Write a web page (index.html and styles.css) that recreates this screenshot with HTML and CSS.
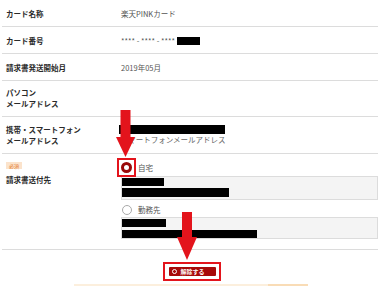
FILE: index.html
```html
<!DOCTYPE html>
<html lang="ja">
<head>
<meta charset="utf-8">
<link rel="stylesheet" href="styles.css">
</head>
<body>
<div class="page">
  <div class="row r-short">
    <div class="label">カード名称</div>
    <div class="value">楽天PINKカード</div>
  </div>
  <div class="row r-short">
    <div class="label">カード番号</div>
    <div class="value">**** - **** - **** -<span class="mask card-mask"></span></div>
  </div>
  <div class="row r-short">
    <div class="label">請求書発送開始月</div>
    <div class="value">2019年05月</div>
  </div>
  <div class="row r-tall r-pc">
    <div class="label">パソコン<br>メールアドレス</div>
    <div class="value"></div>
  </div>
  <div class="row r-tall r-mobile">
    <div class="label">携帯・スマートフォン<br>メールアドレス</div>
    <div class="value">
      <div class="mask mobile-mask"></div>
      <div class="hint">スマートフォンメールアドレス</div>
    </div>
  </div>
  <div class="row r-addr">
    <div class="label">
      <span class="badge">必須</span>
      <div class="label-text">請求書送付先</div>
    </div>
    <div class="value">
      <div class="radio-line">
        <span class="radio checked"></span><span class="radio-text">自宅</span>
      </div>
      <div class="addr-box box-home">
        <span class="mask bar-a"></span>
        <span class="mask bar-b"></span>
      </div>
      <div class="radio-line second">
        <span class="radio"></span><span class="radio-text">勤務先</span>
      </div>
      <div class="addr-box box-work">
        <span class="mask bar-c"></span>
        <span class="mask bar-d"></span>
      </div>
    </div>
  </div>
  <div class="actions">
    <div class="highlight">
      <button class="btn"><span class="btn-icon"></span>解除する</button>
    </div>
  </div>
  <div class="notice"><span class="notice-accent"></span></div>
</div>

<div class="mark-radio"></div>
<svg class="arrow arrow-1" width="20" height="47" viewBox="0 0 20 47">
  <rect x="4.5" y="0" width="10" height="28" fill="#e3141c"/>
  <polygon points="0,27 19,27 9.5,47" fill="#e3141c"/>
</svg>
<svg class="arrow arrow-2" width="21" height="48" viewBox="0 0 21 48">
  <rect x="5" y="0" width="10" height="26" fill="#e3141c"/>
  <polygon points="0,25 20,25 10,48" fill="#e3141c"/>
</svg>
</body>
</html>
```

FILE: styles.css
```css
* { box-sizing: border-box; }

html, body {
  margin: 0;
  padding: 0;
  background: #ffffff;
}

body {
  width: 378px;
  height: 286px;
  overflow: hidden;
  position: relative;
  font-family: "Noto Sans CJK JP", "Noto Sans", sans-serif;
  font-size: 7.5px;
  line-height: 11px;
  color: #444;
}

.page {
  margin-left: 2px;
  width: 376px;
}

.row {
  display: grid;
  grid-template-columns: 115px 1fr;
  padding-left: 4px;
  border-bottom: 1px solid #dcdcdc;
}

.r-short { padding-top: 8px; padding-bottom: 7px; }
.r-pc { padding-top: 6px; padding-bottom: 7px; }
.r-mobile { padding-top: 7px; padding-bottom: 7px; }
.r-addr { padding-top: 8px; padding-bottom: 10px; }

.label {
  color: #2a2a2a;
  font-weight: 700;
}

.value {
  color: #555;
}

.mask {
  background: #000;
  display: inline-block;
}

.card-mask {
  width: 23px;
  height: 8px;
  vertical-align: -1px;
  margin-left: -2px;
}

.mobile-mask {
  display: block;
  width: 106px;
  height: 9px;
  margin-top: 1px;
  margin-left: -2px;
}

.hint {
  color: #666;
}

.badge {
  display: inline-block;
  background: #fbe3cc;
  color: #e3782b;
  font-size: 5px;
  line-height: 7px;
  height: 7px;
  padding: 0 3px;
  font-weight: 400;
  vertical-align: top;
}

.label-text {
  margin-top: 1px;
}

.radio-line {
  display: flex;
  align-items: center;
  height: 11px;
}

.radio-line.second {
  margin-top: 4px;
}

.radio {
  display: inline-block;
  width: 10px;
  height: 10px;
  border-radius: 50%;
  border: 1px solid #aaa;
  background: #fff;
  margin-left: 1px;
}

.radio.checked {
  width: 11px;
  height: 11px;
  border: 3px solid #9a0a0a;
  margin-left: 0;
}

.radio-text {
  margin-left: 6px;
  color: #555;
}

.addr-box {
  background: #f4f4f4;
  border: 1px solid #dcdcdc;
  padding: 1px 0 2px 0;
  display: flex;
  flex-direction: column;
  align-items: flex-start;
}

.box-home {
  margin-top: 3px;
  gap: 2px;
}

.box-work {
  margin-top: 2px;
  gap: 3px;
  padding-bottom: 0;
}

.bar-a { width: 42px; height: 8px; }
.bar-b { width: 107px; height: 9px; }
.bar-c { width: 44px; height: 8px; }
.bar-d { width: 135px; height: 8px; }

.actions {
  display: flex;
  justify-content: center;
  padding-top: 12px;
  padding-left: 3px;
}

.highlight {
  border: 2px solid #e3141c;
  padding: 3px 3px 3px 4px;
  background: #fff;
}

.btn {
  display: flex;
  align-items: center;
  width: 47px;
  height: 9px;
  margin: 0;
  padding: 0 0 0 3px;
  border: none;
  border-radius: 1px;
  background: #a70a0a;
  color: #fff;
  font-family: "Noto Sans CJK JP", "Noto Sans", sans-serif;
  font-size: 6px;
  line-height: 9px;
  font-weight: 700;
}

.btn-icon {
  display: inline-block;
  width: 5px;
  height: 5px;
  border-radius: 50%;
  border: 1.5px solid #fff;
  margin-right: 4px;
}

.notice {
  width: 234px;
  height: 4px;
  margin: 3px auto 0;
  background: #fcefdd;
  display: flex;
  justify-content: flex-end;
  position: relative;
  left: 1px;
}

.notice-accent {
  width: 40px;
  height: 4px;
  background: #f9dcb6;
}

.mark-radio {
  position: absolute;
  left: 117px;
  top: 158px;
  width: 19px;
  height: 19px;
  border: 2px solid #e3141c;
}

.arrow {
  position: absolute;
  display: block;
}

.arrow-1 { left: 116px; top: 110px; }
.arrow-2 { left: 177px; top: 212px; }
```
